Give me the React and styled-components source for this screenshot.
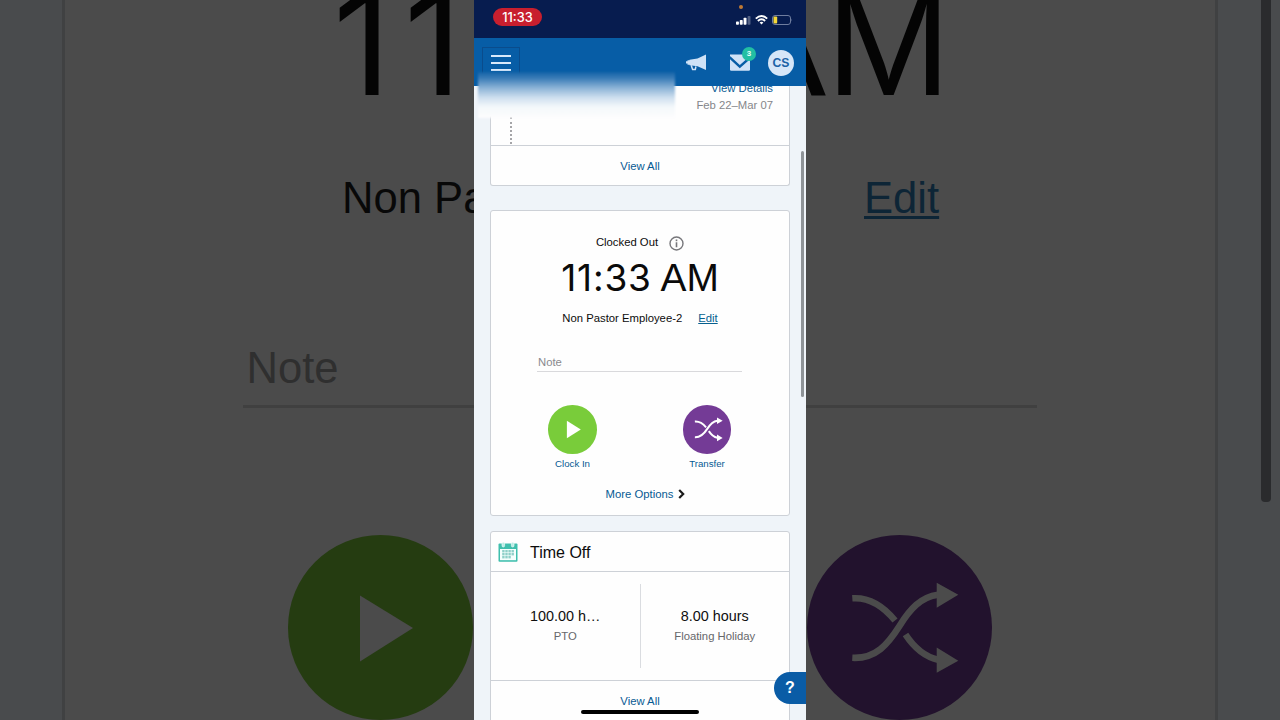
import React from "react";
import styled, { createGlobalStyle } from "styled-components";

const GlobalStyle = createGlobalStyle`
  * { box-sizing: border-box; }
  body {
    margin: 0;
    background: #4b4b4b;
    font-family: "Liberation Sans", Arial, sans-serif;
    overflow: hidden;
  }
`;

const Stage = styled.div`
  display: grid;
  grid-template-columns: 474px 332px 474px;
  width: 1280px;
  height: 720px;
  overflow: hidden;
`;

/* Dimmed, enlarged backdrop */

const Side = styled.div`
  display: flex;
  justify-content: ${(p) => (p.$right ? "flex-start" : "flex-end")};
  height: 720px;
  overflow: hidden;
  background: #494b4d;
`;

const SideCard = styled.div`
  display: flex;
  flex-direction: column;
  width: 412px;
  height: 720px;
  overflow: hidden;
  background: #4b4b4b;
  border: 0 solid #404142;
  border-left-width: ${(p) => (p.$right ? 0 : 3)}px;
  border-right-width: ${(p) => (p.$right ? 3 : 0)}px;
`;

const BigTime = styled.div`
  display: flex;
  flex: none;
  justify-content: ${(p) => (p.$right ? "flex-end" : "flex-start")};
  width: ${(p) => (p.$right ? "145px" : "auto")};
  height: 170px;
  margin-top: -42px;
  padding-left: ${(p) => (p.$right ? 0 : 268)}px;
  font-size: 150px;
  line-height: 170px;
  color: #040404;
  white-space: nowrap;
  overflow: hidden;
`;

const BigLine = styled.div`
  flex: none;
  height: 50px;
  margin-top: ${(p) => p.$top}px;
  padding-left: ${(p) => p.$left}px;
  font-size: 43.6px;
  line-height: 50px;
  color: ${(p) => p.$color};
  white-space: nowrap;
  overflow: hidden;
`;

const BigLink = styled.span`
  color: #0d2536;
  text-decoration: underline;
  text-decoration-thickness: 3px;
  text-underline-offset: 3px;
`;

const BigRule = styled.div`
  flex: none;
  height: 3px;
  width: ${(p) => p.$width}px;
  margin-left: ${(p) => p.$left}px;
  margin-top: ${(p) => p.$top}px;
  background: #404040;
`;

const SideScroll = styled.div`
  width: 10px;
  height: 502px;
  margin-left: 43px;
  border-radius: 0 0 4px 4px;
  background: #2a2b2d;
`;

const Disc = styled.div`
  flex: none;
  width: ${(p) => p.$size}px;
  height: ${(p) => p.$size}px;
  margin: ${(p) => p.$margin || "0"};
  border-radius: 50%;
  background: ${(p) => p.$bg};
  color: ${(p) => p.$fg};
  svg { display: block; width: 100%; height: 100%; }
`;

/* Digits use a face whose "1" has no foot */
const Digits = styled.span`
  font-family: Inter, "Liberation Sans", sans-serif;
  font-size: 0.952em;
  letter-spacing: ${(p) => p.$tracking || 0}em;
`;

/* Phone */

const Phone = styled.div`
  position: relative;
  display: flex;
  flex-direction: column;
  width: 332px;
  height: 720px;
  overflow: hidden;
  background: #eff4f9;
`;

const StatusBar = styled.div`
  display: flex;
  flex: none;
  justify-content: space-between;
  height: 38px;
  padding: 8px 13px 0 19px;
  background: #071c4f;
`;

const TimePill = styled.div`
  width: 49px;
  height: 18px;
  padding-top: 1px;
  border-radius: 9px;
  background: #c81f2e;
  color: #fff;
  font: 500 12.8px/17px Inter, sans-serif;
  text-align: center;
`;

const StatusIcons = styled.div`
  display: flex;
  align-items: center;
  gap: 4px;
  height: 24px;
  svg { display: block; }
`;

const RecordingDot = styled.i`
  position: absolute;
  left: 264.5px;
  top: 5px;
  width: 4px;
  height: 4px;
  border-radius: 50%;
  background: #c07a34;
`;

const NavBar = styled.div`
  display: flex;
  flex: none;
  align-items: center;
  justify-content: space-between;
  height: 48px;
  padding: 1px 12px 0 8px;
  background: #075da6;
`;

const MenuButton = styled.div`
  display: flex;
  flex-direction: column;
  align-items: center;
  justify-content: center;
  gap: 5px;
  width: 38px;
  height: 31px;
  border: 1px solid #0a4c8c;
`;

const MenuBar = styled.i`
  width: 20px;
  height: 2px;
  background: #d8e9fb;
`;

const NavActions = styled.div`
  display: flex;
  align-items: center;
  svg { display: block; }
`;

const Mail = styled.div`
  position: relative;
  margin: 0 18px 0 24px;
`;

const Badge = styled.span`
  position: absolute;
  left: 12px;
  top: -7px;
  width: 14px;
  height: 14px;
  border-radius: 50%;
  background: #22bfa3;
  color: #e8fffa;
  font-size: 8px;
  font-weight: 700;
  line-height: 14px;
  text-align: center;
`;

const Avatar = styled.div`
  width: 26px;
  height: 26px;
  border-radius: 50%;
  background: #d6e6f8;
  color: #1c62a6;
  font-size: 12.2px;
  font-weight: 700;
  line-height: 26px;
  text-align: center;
`;

const Redaction = styled.div`
  position: absolute;
  left: 4px;
  top: 72px;
  width: 197px;
  height: 46px;
  background: linear-gradient(#1463a8 0%, #3c7db8 14%, #8db4d7 35%, #cfe0ef 56%, #f4f8fb 76%, #fdfdfe 100%);
  filter: blur(1.2px);
`;

const Scroller = styled.div`
  display: flex;
  flex-direction: column;
  flex: 1;
  padding: 0 16px;
  min-height: 0;
  overflow: hidden;
`;

const ScrollThumb = styled.div`
  position: absolute;
  left: 327px;
  top: 151px;
  width: 3px;
  height: 246px;
  border-radius: 2px;
  background: #8e9397;
`;

const Card = styled.section`
  display: flex;
  flex: none;
  flex-direction: column;
  height: ${(p) => p.$height}px;
  margin-top: ${(p) => p.$top || 0}px;
  border: 1px solid #cdd1d7;
  border-top-width: ${(p) => (p.$cut ? 0 : 1)}px;
  border-radius: ${(p) => (p.$cut ? "0 0 3px 3px" : "3px")};
  background: #fefefe;
  overflow: hidden;
`;

const CardFooter = styled.div`
  flex: none;
  height: 41px;
  border-top: 1px solid #cdd1d7;
  color: #075a93;
  font-size: 11.3px;
  line-height: 40px;
  text-align: center;
`;

const Timeline = styled.div`
  display: flex;
  flex: none;
  justify-content: space-between;
  height: 59px;
  padding: 0 16px 0 19px;
`;

const DottedLine = styled.div`
  width: 0;
  height: 27px;
  margin-top: 31px;
  border-left: 2px dotted #a5a5a8;
`;

const Period = styled.div`
  margin-top: -6px;
  font-size: 11.3px;
  line-height: 16.5px;
  text-align: right;
  color: #85868a;
`;

const PeriodLink = styled.div`
  color: #075a93;
`;

const StatusRow = styled.div`
  display: flex;
  flex: none;
  align-items: center;
  justify-content: center;
  gap: ${(p) => p.$gap}px;
  height: 16px;
  margin-top: ${(p) => p.$top}px;
  font-size: 11.3px;
  line-height: 16px;
  color: #0c0c0c;
  svg { display: block; }
`;

const StatusLabel = styled.span`
  margin-top: -2px;
`;

const Clock = styled.div`
  flex: none;
  height: 40px;
  margin-top: 7px;
  font-size: 38.9px;
  line-height: 40px;
  text-align: center;
  color: #0a0a0a;
  white-space: nowrap;
`;

const EditLink = styled.span`
  color: #07608f;
  text-decoration: underline;
  text-underline-offset: 1px;
`;

const NoteField = styled.div`
  flex: none;
  width: 205px;
  height: 19px;
  margin: 27px 0 0 46px;
  border-bottom: 1px solid #d9d9dc;
  padding-left: 1px;
  font-size: 11.3px;
  line-height: 18px;
  color: #8a8a8e;
`;

const Actions = styled.div`
  display: flex;
  flex: none;
  justify-content: space-between;
  width: 194.5px;
  margin: 33px 0 0 51.5px;
`;

const Action = styled.div`
  display: flex;
  flex-direction: column;
  align-items: center;
  width: 60px;
  font-size: 9.7px;
  line-height: 12px;
  color: #075a93;
`;

const ActionLabel = styled.span`
  margin-top: 4.5px;
`;

const MoreOptions = styled.div`
  display: flex;
  flex: none;
  align-items: center;
  justify-content: center;
  gap: 5px;
  height: 16px;
  margin-top: 16px;
  padding-left: 11px;
  font-size: 11.3px;
  line-height: 16px;
  color: #075a93;
`;

const CardTitle = styled.div`
  display: flex;
  flex: none;
  align-items: center;
  gap: 12px;
  height: 40px;
  padding: 1px 0 0 7px;
  border-bottom: 1px solid #cdd1d7;
  font-size: 16px;
  line-height: 20px;
  color: #0c0c0c;
`;

const CardHeading = styled.span`
  padding-top: 1px;
`;

const Balances = styled.div`
  display: grid;
  flex: none;
  grid-template-columns: 1fr 1px 1fr;
  align-items: center;
  height: 108px;
`;

const Balance = styled.div`
  display: flex;
  flex-direction: column;
  align-items: center;
  padding-bottom: 3px;
`;

const Divider = styled.i`
  height: 84px;
  background: #dadce0;
`;

const Hours = styled.div`
  font-size: 14.4px;
  line-height: 22px;
  color: #0f0f0f;
`;

const Kind = styled.div`
  font-size: 11.3px;
  line-height: 18px;
  color: #66676a;
`;

const HelpButton = styled.div`
  position: absolute;
  right: 0;
  top: 672px;
  width: 32px;
  height: 32px;
  border-radius: 16px 0 0 16px;
  background: #0a5ca6;
  color: #fff;
  font-size: 16px;
  font-weight: 700;
  line-height: 32px;
  text-align: center;
`;

const HomeIndicator = styled.div`
  position: absolute;
  left: 107px;
  top: 709.5px;
  width: 118px;
  height: 4px;
  border-radius: 2px;
  background: #000;
`;

const PlayIcon = () => (
  <svg viewBox="0 0 185 185">
    <path d="M72 60.5L125 93L72 126.5Z" fill="currentColor" />
  </svg>
);

const TransferIcon = ({ weight = 6.6 }) => (
  <svg viewBox="0 0 185 185" fill="none" stroke="currentColor" strokeWidth={weight}>
    <path d="M45.3 63.3C64 62 77 72 88 85.5" />
    <path d="M98.5 99.5C108 114 119 122 131 124.7" />
    <path d="M45.3 122.8C69 124 81 109 92.5 91C103 74 114 62 131 59.8" />
    <path d="M129.7 47.8L151.3 59.8L129.7 72.8ZM129.7 112.5L151.3 125.8L129.7 137.8Z" fill="currentColor" stroke="none" />
  </svg>
);

const SignalIcon = () => (
  <svg width="15" height="9" viewBox="0 0 15 9" fill="#fff">
    <rect x="0" y="5.5" width="2.9" height="3.2" rx=".7" />
    <rect x="3.8" y="4" width="2.9" height="4.7" rx=".7" />
    <rect x="7.6" y="1.8" width="2.9" height="6.9" rx=".7" />
    <rect x="11.6" y="0" width="2.9" height="8.7" rx=".7" opacity=".3" />
  </svg>
);

const WifiIcon = () => (
  <svg width="13" height="10" viewBox="0 0 13 10" fill="none" stroke="#fff" strokeWidth="1.9">
    <path d="M.8 3.6Q6.5 -1.6 12.2 3.6" />
    <path d="M2.9 6Q6.5 2.6 10.1 6" />
    <path d="M4.6 7.5Q6.5 6 8.4 7.5L6.5 9.6Z" fill="#fff" stroke="none" />
  </svg>
);

const BatteryIcon = () => (
  <svg width="21" height="10" viewBox="0 0 21 10">
    <rect x=".5" y=".5" width="18" height="9" rx="2.5" fill="none" stroke="#6f7d9f" />
    <rect x="1.5" y="1.5" width="3.7" height="7" rx="1" fill="#f5d838" />
    <path d="M19.5 3.5Q20.8 5 19.5 6.5Z" fill="#6f7d9f" />
  </svg>
);

const MegaphoneIcon = () => (
  <svg width="20" height="18" viewBox="0 0 20 18" fill="#cfe2f7">
    <path d="M20 .5V16L11.5 12.3L3.5 11.2V5.8L11.5 4.4Z" />
    <path d="M1.5 6.3H4V10.8H1.5V9.6H0V7.3H1.5Z" />
    <path d="M5.2 11.3L6.6 15.6H9.3L9.9 12.5" fill="none" stroke="#cfe2f7" strokeWidth="1.5" strokeLinejoin="round" />
  </svg>
);

const MailIcon = () => (
  <svg width="20" height="17" viewBox="0 0 20 17">
    <path d="M0 .5H20V15.5Q20 16.7 18.8 16.7H1.2Q0 16.7 0 15.5Z" fill="#cfe2f7" />
    <path d="M-.5 3.2L9.8 12.6L20.5 3.2" fill="none" stroke="#075da6" strokeWidth="2.4" />
  </svg>
);

const InfoIcon = () => (
  <svg width="15" height="15" viewBox="0 0 15 15" fill="none" stroke="#77777b">
    <circle cx="7.5" cy="7.5" r="6.5" strokeWidth="1.4" />
    <path d="M7.5 6.3V11.3" strokeWidth="1.6" />
    <rect x="6.7" y="3.5" width="1.6" height="1.7" fill="#77777b" stroke="none" />
  </svg>
);

const ChevronIcon = () => (
  <svg width="7" height="10" viewBox="0 0 7 10" fill="none" stroke="#1a1a1a" strokeWidth="2.2">
    <path d="M1.2 .9L5.2 5L1.2 9.1" />
  </svg>
);

const CalendarIcon = () => (
  <svg width="20" height="20" viewBox="0 0 20 20">
    <rect x=".5" y="1.5" width="19" height="18.2" rx="1" fill="#3fbfad" />
    <rect x="2" y="7" width="16" height="11.2" fill="#f4fffd" />
    <rect x="4" y=".2" width="2.6" height="4.8" rx="1.3" fill="#b9ece5" stroke="#fff" strokeWidth=".6" />
    <rect x="13.4" y=".2" width="2.6" height="4.8" rx="1.3" fill="#b9ece5" stroke="#fff" strokeWidth=".6" />
    {[8, 11, 14].map((y, row) =>
      [4.2, 7.3, 10.4, 13.5].map((x, col) =>
        row === 2 && col === 3 ? null : (
          <rect key={`${x}-${y}`} x={x} y={y} width="2.4" height="2.4" fill="#8fd0c9" />
        )
      )
    )}
  </svg>
);

export default function App() {
  return (
    <Stage>
      <GlobalStyle />
      <Side>
        <SideCard>
          <BigTime>
            <Digits $tracking={0.09}>11</Digits>
          </BigTime>
          <BigLine $top={45} $left={277} $color="#080808">Non Pastor</BigLine>
          <BigLine $top={120} $left={181.5} $color="#2f2f2f">Note</BigLine>
          <BigRule $top={12} $left={178} $width={231} />
          <Disc $size={185} $bg="#253c11" $fg="#4b4b4b" $margin="127px 0 0 223px">
            <PlayIcon />
          </Disc>
        </SideCard>
      </Side>

      <Phone>
        <StatusBar>
          <TimePill>11:33</TimePill>
          <StatusIcons>
            <SignalIcon />
            <WifiIcon />
            <BatteryIcon />
          </StatusIcons>
          <RecordingDot />
        </StatusBar>
        <NavBar>
          <MenuButton>
            <MenuBar />
            <MenuBar />
            <MenuBar />
          </MenuButton>
          <NavActions>
            <MegaphoneIcon />
            <Mail>
              <MailIcon />
              <Badge>3</Badge>
            </Mail>
            <Avatar>CS</Avatar>
          </NavActions>
        </NavBar>
        <Scroller>
          <Card $cut $height={100}>
            <Timeline>
              <DottedLine />
              <Period>
                <PeriodLink>View Details</PeriodLink>
                Feb 22–Mar 07
              </Period>
            </Timeline>
            <CardFooter>View All</CardFooter>
          </Card>

          <Card $top={24} $height={306}>
            <StatusRow $top={24} $gap={11}>
              <StatusLabel>Clocked Out</StatusLabel>
              <InfoIcon />
            </StatusRow>
            <Clock>
              <Digits $tracking={0.022}>11:33</Digits> AM
            </Clock>
            <StatusRow $top={12} $gap={16}>
              Non Pastor Employee-2
              <EditLink>Edit</EditLink>
            </StatusRow>
            <NoteField>Note</NoteField>
            <Actions>
              <Action>
                <Disc $size={48.5} $bg="#79cc3a" $fg="#fff">
                  <PlayIcon />
                </Disc>
                <ActionLabel>Clock In</ActionLabel>
              </Action>
              <Action>
                <Disc $size={48.5} $bg="#743b96" $fg="#fff">
                  <TransferIcon weight={7.6} />
                </Disc>
                <ActionLabel>Transfer</ActionLabel>
              </Action>
            </Actions>
            <MoreOptions>
              More Options
              <ChevronIcon />
            </MoreOptions>
          </Card>

          <Card $top={15} $height={220}>
            <CardTitle>
              <CalendarIcon />
              <CardHeading>Time Off</CardHeading>
            </CardTitle>
            <Balances>
              <Balance>
                <Hours>100.00 h…</Hours>
                <Kind>PTO</Kind>
              </Balance>
              <Divider />
              <Balance>
                <Hours>8.00 hours</Hours>
                <Kind>Floating Holiday</Kind>
              </Balance>
            </Balances>
            <CardFooter>View All</CardFooter>
          </Card>
        </Scroller>
        <Redaction />
        <ScrollThumb />
        <HelpButton>?</HelpButton>
        <HomeIndicator />
      </Phone>

      <Side $right>
        <SideCard $right>
          <BigTime $right>AM</BigTime>
          <BigLine $top={45} $left={58} $color="#0d2536">
            <BigLink>Edit</BigLink>
          </BigLine>
          <BigRule $top={182} $left={0} $width={231} />
          <Disc $size={185} $bg="#22122d" $fg="#4b4b4b" $margin="127px 0 0 1px">
            <TransferIcon />
          </Disc>
        </SideCard>
        <SideScroll />
      </Side>
    </Stage>
  );
}
